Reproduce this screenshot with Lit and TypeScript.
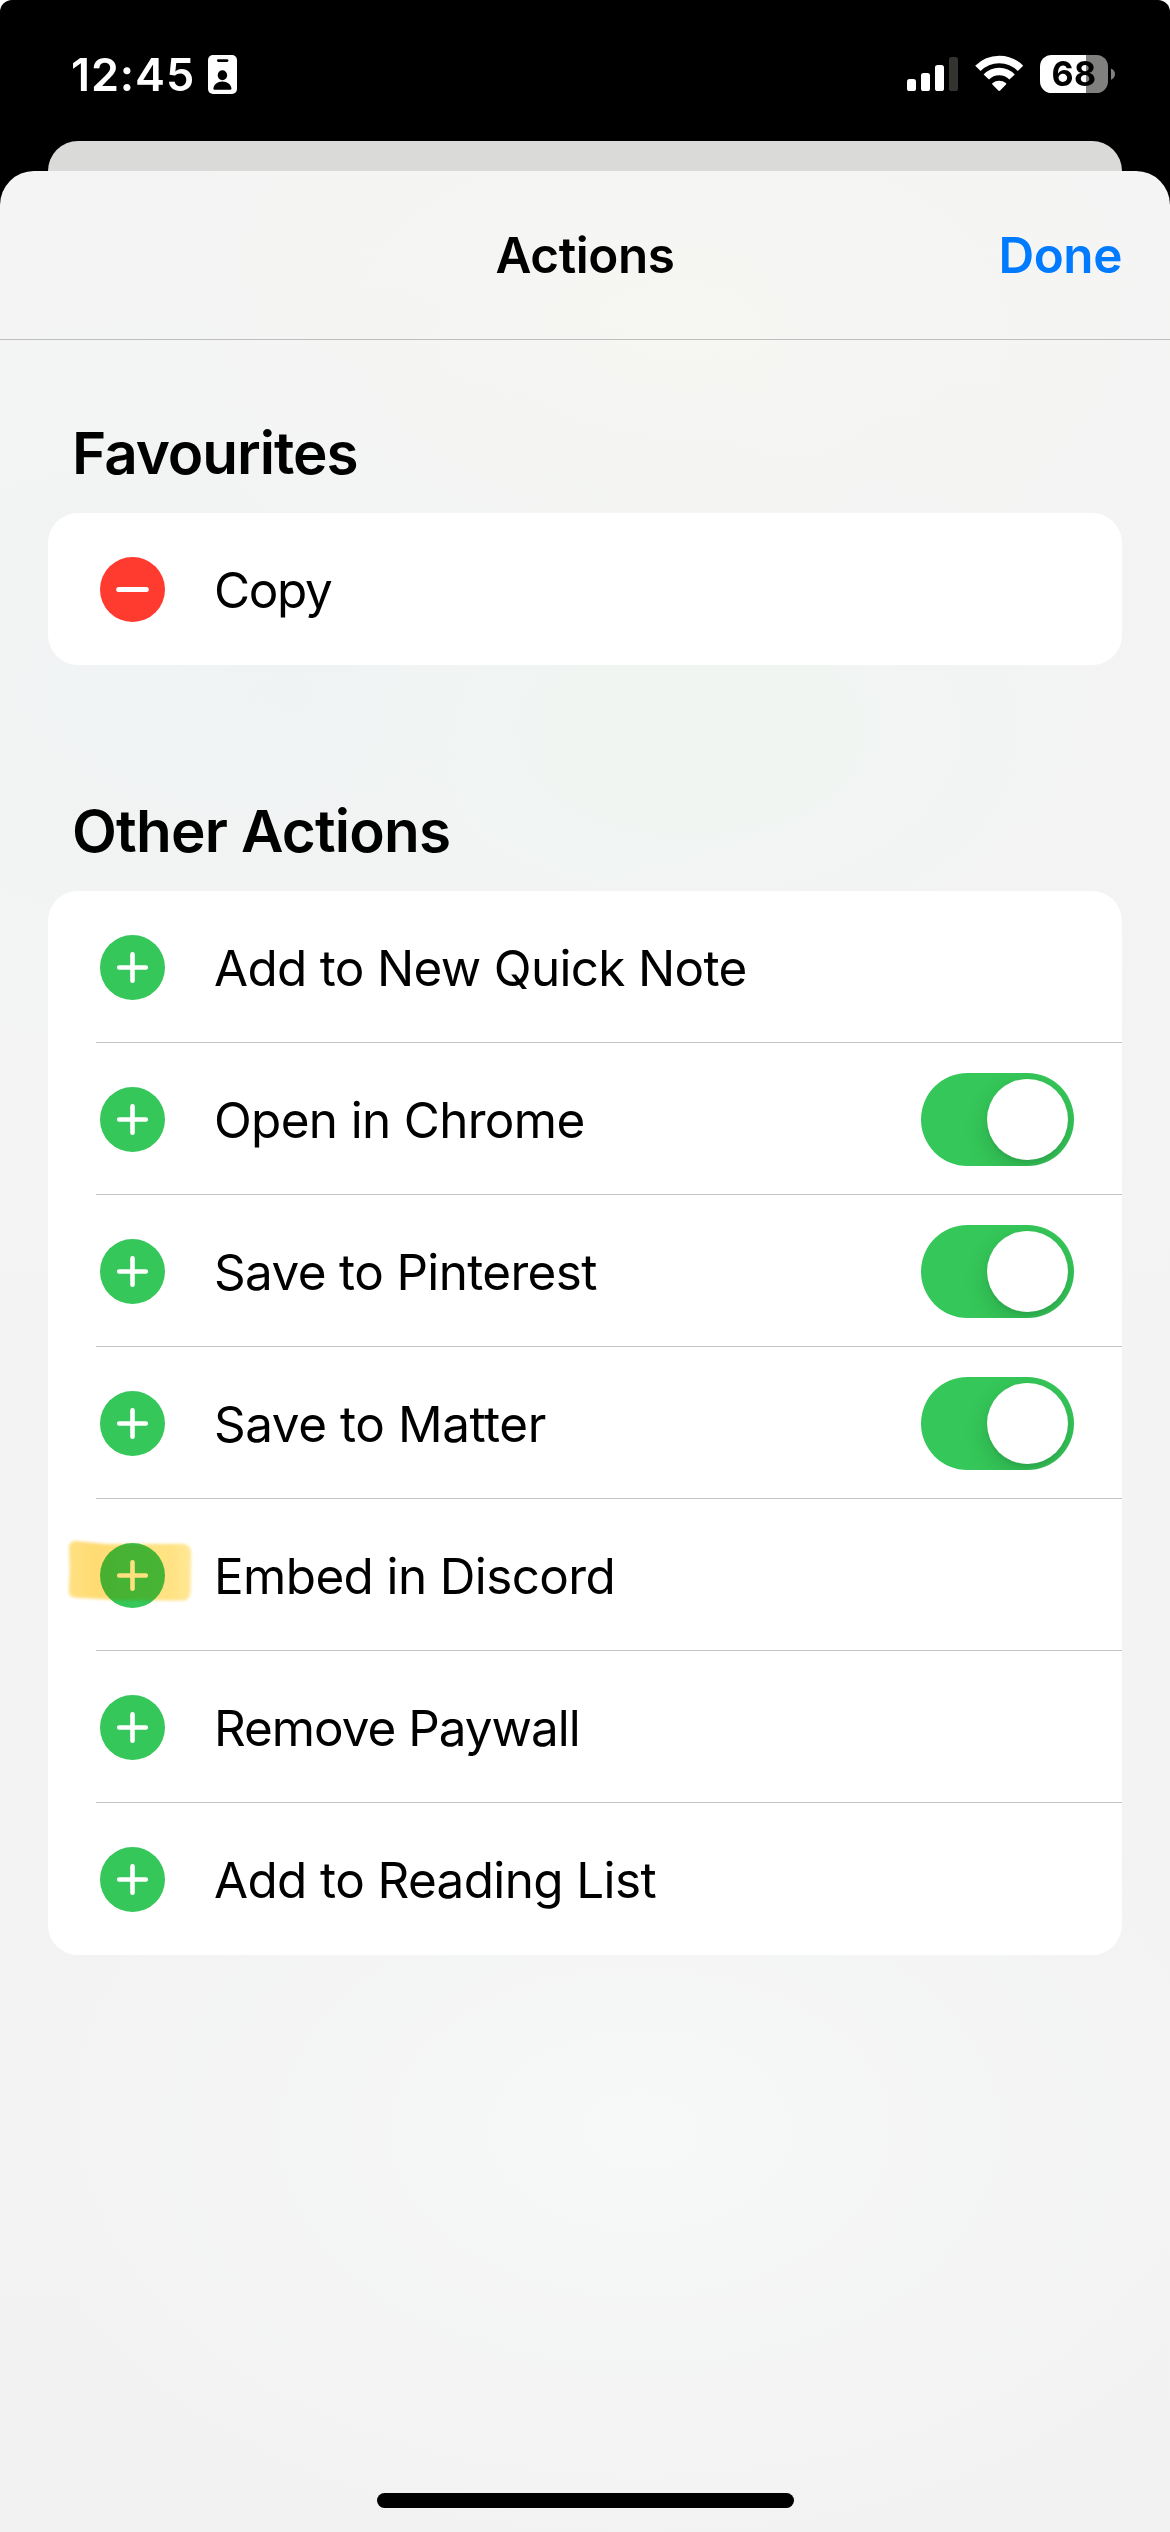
import { LitElement, html, svg, css, nothing } from "lit";
import { customElement, property } from "lit/decorators.js";
import { styleMap } from "lit/directives/style-map.js";

interface Action {
  label: string;
  tracking: number;
  switchable?: boolean;
  highlighted?: boolean;
}

const favourites: Action[] = [{ label: "Copy", tracking: -1.3 }];

const otherActions: Action[] = [
  { label: "Add to New Quick Note", tracking: -0.66 },
  { label: "Open in Chrome", tracking: -0.65, switchable: true },
  { label: "Save to Pinterest", tracking: -0.62, switchable: true },
  { label: "Save to Matter", tracking: -0.42, switchable: true },
  { label: "Embed in Discord", tracking: -0.6, highlighted: true },
  { label: "Remove Paywall", tracking: -1 },
  { label: "Add to Reading List", tracking: -0.6 },
];

@customElement("status-bar")
export class StatusBar extends LitElement {
  static styles = css`
    :host {
      display: flex;
      align-items: center;
      box-sizing: border-box;
      height: 141px;
      padding: 8px 54px 0 71px;
      color: #fff;
    }
    .time {
      width: 137px;
      font-size: 45px;
      font-weight: 600;
      line-height: 54px;
      letter-spacing: 0.9px;
      white-space: nowrap;
    }
    .indicators {
      display: flex;
      margin-left: auto;
    }
    svg {
      display: block;
      flex: none;
    }
    .signal {
      margin-right: 17px;
    }
    .wifi {
      margin-right: 16px;
    }
    .battery {
      box-sizing: border-box;
      width: 68px;
      height: 38px;
      border-radius: 11.5px;
      background: linear-gradient(90deg, #fff 46px, #80807f 46px);
      color: #000;
      font-size: 34px;
      font-weight: 700;
      line-height: 38px;
      letter-spacing: 0.5px;
      text-align: center;
    }
    .cap {
      margin-left: 3px;
    }
  `;

  render() {
    return html`
      <span class="time">12:45</span>
      <svg width="29" height="39" viewBox="0 0 29 39">
        <rect width="29" height="39" rx="5" fill="#fff" />
        <rect x="9" y="4.2" width="11.4" height="2.7" rx="1.35" fill="#000" />
        <ellipse cx="14.4" cy="20.3" rx="4.7" ry="5" fill="#000" />
        <path d="M5.4 33.4C5.8 29.4 9.4 26.5 14.4 26.5S23 29.4 23.4 33.4Q23.5 34.8 22.2 34.8H6.6Q5.3 34.8 5.4 33.4Z" fill="#000" />
      </svg>
      <div class="indicators">
        <svg class="signal" width="51" height="39" viewBox="0 0 51 39" fill="#fff">
          <rect x="0" y="24" width="9" height="12" rx="2.6" />
          <rect x="14" y="18" width="9" height="18" rx="2.6" />
          <rect x="28" y="10" width="9" height="26" rx="2.6" />
          <rect x="42" y="2" width="9" height="34" rx="2.6" fill="#333430" />
        </svg>
        <svg class="wifi" width="49" height="39" viewBox="0 0 49 39">
          <g fill="none" stroke="#fff">
            <path d="M2.9 13.4A29.8 29.8 0 0 1 45.5 13.4" stroke-width="7.6" />
            <path d="M11.3 22.1A17.6 17.6 0 0 1 37.1 22.1" stroke-width="7.4" />
          </g>
          <path d="M23.3 35.6L17.4 29.6Q16.7 28.8 17.6 28.1A10.6 10.6 0 0 1 30.8 28.1Q31.7 28.8 31 29.6L25.1 35.6Q24.2 36.4 23.3 35.6Z" fill="#fff" />
        </svg>
        <div class="battery">68</div>
        <svg class="cap" width="5" height="39" viewBox="0 0 5 39">
          <path d="M0 13.4C2.5 14.4 4 16.5 4 19S2.500 23.8 0 24.8Z" fill="#80807f" />
        </svg>
      </div>
    `;
  }
}

@customElement("action-row")
export class ActionRow extends LitElement {
  @property({ attribute: false }) action!: Action;
  @property({ attribute: false }) removable = false;

  static styles = css`
    :host {
      position: relative;
      display: flex;
      align-items: center;
      box-sizing: border-box;
      height: 152px;
      padding: 1px 48px 0 52px;
    }
    svg {
      display: block;
      flex: none;
    }
    .label {
      margin-left: 49px;
      padding-top: 1px;
      font-size: 49.4px;
      line-height: 60px;
      white-space: nowrap;
    }
    .switch {
      display: flex;
      justify-content: flex-end;
      box-sizing: border-box;
      width: 153px;
      height: 93px;
      margin-left: auto;
      padding: 6px;
      overflow: hidden;
      border-radius: 46.5px;
      background: #35c759;
    }
    .knob {
      width: 81px;
      height: 81px;
      border-radius: 50%;
      background: #fff;
      box-shadow: 0 9px 24px rgba(0, 0, 0, 0.16), 0 3px 3px rgba(0, 0, 0, 0.05);
    }
    .marker {
      position: absolute;
      left: 12px;
      top: 36px;
      mix-blend-mode: multiply;
    }
    .tint {
      mix-blend-mode: normal;
      opacity: 0.09;
    }
  `;

  private marker(extra: string) {
    return html`<svg class="marker ${extra}" width="140" height="80" viewBox="0 0 140 80">
      <defs>
        <linearGradient id="ink">
          <stop offset="0" stop-color="#ffe083" />
          <stop offset="0.22" stop-color="#ffdb72" />
          <stop offset="0.45" stop-color="#ffe07e" />
          <stop offset="0.85" stop-color="#ffe283" />
          <stop offset="1" stop-color="#ffe897" />
        </linearGradient>
        <filter id="edge"><feGaussianBlur stdDeviation="1.6" /></filter>
      </defs>
      <path
        d="M9 12Q10 6 15 6L45 9H124Q130 10 131 17L130.500 58Q129 65 124 65.500L60 65L14 62.500Q8.500 61 9 55L9.800 34Z"
        fill="url(#ink)"
        filter="url(#edge)"
      />
    </svg>`;
  }

  render() {
    const { label, tracking, switchable, highlighted } = this.action;
    return html`
      <svg width="65" height="65" viewBox="0 0 65 65">
        <circle cx="32.5" cy="32.5" r="32.5" fill=${this.removable ? "#ff3b30" : "#35c759"} />
        <g stroke="#fff" stroke-linecap="round">
          ${this.removable
            ? svg`<path d="M18.700 32.500H46.300" stroke-width="5" />`
            : svg`<path d="M19.200 32.500H45.800M32.500 19.200V45.800" stroke-width="4.600" />`}
        </g>
      </svg>
      <span class="label" style=${styleMap({ letterSpacing: `${tracking}px` })}>${label}</span>
      ${switchable ? html`<div class="switch"><div class="knob"></div></div>` : nothing}
      ${highlighted ? [this.marker(""), this.marker("tint")] : nothing}
    `;
  }
}

@customElement("app-root")
export class AppRoot extends LitElement {
  static styles = css`
    :host {
      display: block;
      width: 1170px;
      height: 2532px;
      overflow: hidden;
      background: #fff;
      color: #000;
      font-family: Inter, "Liberation Sans", sans-serif;
    }
    .screen {
      display: flex;
      flex-direction: column;
      height: 100%;
      border-radius: 12px 12px 0 0;
      overflow: hidden;
      background: #000;
    }
    .behind {
      flex: none;
      height: 30px;
      margin: 0 48px;
      border-radius: 30px 30px 0 0;
      background: #dadad9;
    }
    .sheet {
      display: flex;
      flex-direction: column;
      flex: 1;
      overflow: hidden;
      border-radius: 34px 34px 0 0;
      background:
        radial-gradient(ellipse 560px 330px at 680px 160px, #f6f7f3, rgba(246, 247, 243, 0)),
        radial-gradient(ellipse 420px 260px at 690px 560px, #f0f5f1, rgba(240, 245, 241, 0)),
        radial-gradient(ellipse 900px 420px at 300px 520px, #f0f3f4, rgba(240, 243, 244, 0)),
        radial-gradient(ellipse 640px 420px at 640px 1960px, #f7f8f8, rgba(247, 248, 248, 0)),
        linear-gradient(#f4f4f4, #f2f2f2);
    }
    .header {
      display: grid;
      grid-template-columns: 1fr auto 1fr;
      align-items: center;
      box-sizing: border-box;
      height: 169px;
      padding: 0 48px;
      border-bottom: 1px solid #bdbebd;
      font-size: 49.4px;
      font-weight: 600;
      line-height: 60px;
    }
    .title {
      grid-column: 2;
      letter-spacing: -0.4px;
    }
    .done {
      justify-self: end;
      color: #007aff;
      letter-spacing: -0.4px;
    }
    .section {
      padding: 78px 48px 0;
    }
    .section + .section {
      padding-top: 131px;
    }
    .heading {
      margin: 0 0 25px;
      padding-left: 24px;
      font-size: 58.4px;
      font-weight: 600;
      line-height: 70px;
      letter-spacing: -0.8px;
    }
    .tight {
      letter-spacing: -1.05px;
    }
    .card {
      border-radius: 30px;
      background: #fff;
    }
    .row:not(:last-child) {
      background: linear-gradient(#c3c3c5, #c3c3c5) 48px 100% / 100% 1px no-repeat;
    }
    .home {
      width: 417px;
      height: 15px;
      margin: auto auto 24px;
      border-radius: 7.5px;
      background: #000;
    }
  `;

  render() {
    return html`
      <div class="screen">
        <status-bar></status-bar>
        <div class="behind"></div>
        <main class="sheet">
          <header class="header">
            <span class="title">Actions</span>
            <span class="done">Done</span>
          </header>
          <section class="section">
            <h2 class="heading tight">Favourites</h2>
            <div class="card">
              ${favourites.map((a) => html`<action-row class="row" .action=${a} .removable=${true}></action-row>`)}
            </div>
          </section>
          <section class="section">
            <h2 class="heading">Other Actions</h2>
            <div class="card">
              ${otherActions.map((a) => html`<action-row class="row" .action=${a}></action-row>`)}
            </div>
          </section>
          <div class="home"></div>
        </main>
      </div>
    `;
  }
}
